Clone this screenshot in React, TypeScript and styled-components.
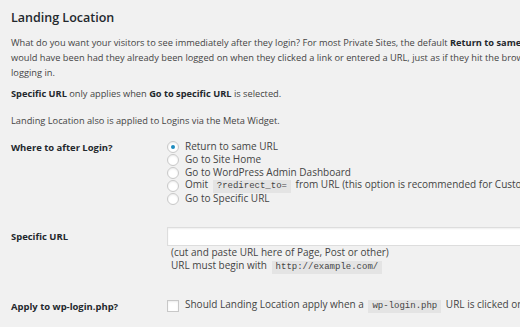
import React from "react";
import styled, { createGlobalStyle } from "styled-components";

const Global = createGlobalStyle`
  html, body { margin: 0; padding: 0; background: #f1f1f1; }
  body { font-family: "Open Sans", "Noto Sans", sans-serif; color: #444; overflow: hidden; }
`;

const Page = styled.div`
  padding: 8px 0 0 11px;
  width: 520px;
  height: 327px;
  box-sizing: border-box;
  overflow: hidden;
  white-space: nowrap;
`;

const Title = styled.h2`
  margin: 0 0 7px;
  font-size: 12.5px;
  font-weight: 600;
  color: #23282d;
  line-height: 20px;
`;

const Para = styled.p<{ $gap?: number }>`
  margin: 0 0 ${(p) => p.$gap ?? 12}px;
  font-size: 9.25px;
  line-height: 15px;
  color: #444;
`;

const B = styled.b`
  font-weight: 700;
  color: #23282d;
`;

const Row = styled.div<{ $pb: number }>`
  display: flex;
  align-items: flex-start;
  padding-bottom: ${(p) => p.$pb}px;
`;

const Label = styled.div<{ $top: number }>`
  width: 156px;
  flex: none;
  font-size: 9.45px;
  font-weight: 700;
  color: #23282d;
  line-height: 15px;
  padding-top: ${(p) => p.$top}px;
`;

const Field = styled.div`
  font-size: 10px;
  line-height: 13px;
  display: flex;
  flex-direction: column;
`;

const Option = styled.label`
  display: flex;
  align-items: center;
  height: 13px;
  gap: 6px;
  color: #444;
`;

const Radio = styled.span<{ $on?: boolean }>`
  width: 10px;
  height: 10px;
  border-radius: 50%;
  border: 1px solid #c8c8c8;
  background: #fff;
  box-shadow: inset 0 1px 2px rgba(0,0,0,0.08);
  display: flex;
  align-items: center;
  justify-content: center;
  flex: none;
  &::after {
    content: "";
    display: ${(p) => (p.$on ? "block" : "none")};
    width: 4px;
    height: 4px;
    border-radius: 50%;
    background: #1e8cbe;
  }
`;

const Check = styled.span`
  width: 10px;
  height: 10px;
  border: 1px solid #c8c8c8;
  background: #fff;
  box-shadow: inset 0 1px 2px rgba(0,0,0,0.08);
  flex: none;
`;

const Code = styled.code`
  font-family: "Liberation Mono", "DejaVu Sans Mono", monospace;
  font-size: 9px;
  line-height: 13px;
  display: inline-block;
  background: #e4e4e4;
  padding: 0 4px;
  margin: 0 2px;
  color: #444;
`;

const Input = styled.div`
  height: 17px;
  width: 360px;
  background: #fff;
  border: 1px solid #ddd;
  box-shadow: inset 0 1px 2px rgba(0,0,0,0.07);
`;

const Help = styled.div`
  padding-left: 4px;
  line-height: 13px;
  color: #444;
`;

export default function App() {
  return (
    <Page>
      <Global />
      <Title>Landing Location</Title>
      <Para $gap={6}>
        What do you want your visitors to see immediately after they login? For most Private Sites, the default <B>Return to same URL</B> shows them what they
        <br />
        would have been had they already been logged on when they clicked a link or entered a URL, just as if they hit the browser's Back button after
        <br />
        logging in.
      </Para>
      <Para $gap={12}>
        <B>Specific URL</B> only applies when <B>Go to specific URL</B> is selected.
      </Para>
      <Para $gap={12}>Landing Location also is applied to Logins via the Meta Widget.</Para>
      <Row $pb={22}>
        <Label $top={0}>Where to after Login?</Label>
        <Field>
          <Option><Radio $on /><span>Return to same URL</span></Option>
          <Option><Radio /><span>Go to Site Home</span></Option>
          <Option><Radio /><span>Go to WordPress Admin Dashboard</span></Option>
          <Option><Radio /><span>Omit <Code>?redirect_to=</Code> from URL (this option is recommended for Custom Login pages)</span></Option>
          <Option><Radio /><span>Go to Specific URL</span></Option>
        </Field>
      </Row>
      <Row $pb={25}>
        <Label $top={2}>Specific URL</Label>
        <Field>
          <Input />
          <Help>(cut and paste URL here of Page, Post or other)</Help>
          <Help>URL must begin with <Code>http://example.com/</Code></Help>
        </Field>
      </Row>
      <Row $pb={0}>
        <Label $top={0}>Apply to wp-login.php?</Label>
        <Field>
          <Option>
            <Check /><span>Should Landing Location apply when a <Code>wp-login.php</Code> URL is clicked or entered?</span>
          </Option>
        </Field>
      </Row>
    </Page>
  );
}
